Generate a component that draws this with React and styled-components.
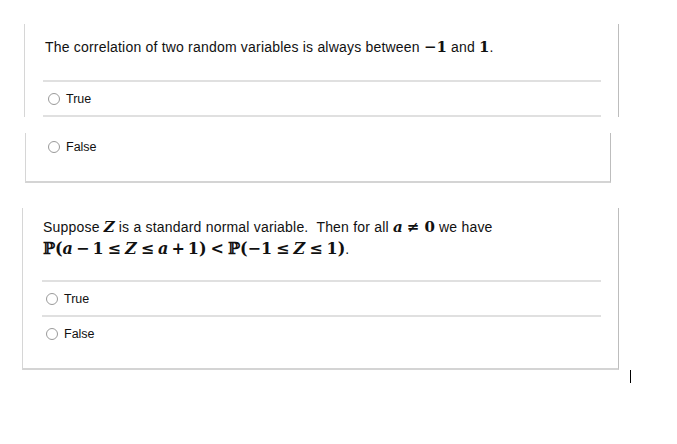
import React from 'react'
import styled, { createGlobalStyle } from 'styled-components'

const Global = createGlobalStyle`
  html, body {
    margin: 0;
    background: #fff;
    font-family: "Liberation Sans", Arial, sans-serif;
    color: #111;
  }
`

const Page = styled.div`
  width: 677px;
  height: 444px;
  padding-top: 24px;
  box-sizing: border-box;
  display: flex;
  flex-direction: column;
`

const Panel = styled.div`
  box-sizing: border-box;
  margin-left: ${p => p.left}px;
  width: ${p => p.width}px;
  margin-top: ${p => p.top || 0}px;
  border-left: 1px solid #d6d6d6;
  border-right: 1px solid #bdbdbd;
  border-bottom: ${p => (p.bottom ? '2px solid #d4d4d4' : 'none')};
  padding: ${p => p.pad || '0 17px 0 18px'};
`

const Question = styled.div`
  font-size: 14px;
  letter-spacing: 0.2px;
  line-height: 22px;
  padding: ${p => p.pad || '12px 0 22px 2px'};
`

const Mb = styled.span`
  font-family: "DejaVu Serif", "Liberation Serif", serif;
  font-weight: bold;
  font-size: 15px;
  letter-spacing: 0;
  line-height: 1;
  font-style: ${p => (p.italic ? 'italic' : 'normal')};
`

const MathLine = styled.div`
  font-family: "DejaVu Serif", "Liberation Serif", serif;
  font-weight: bold;
  font-size: 16px;
  letter-spacing: 0;
  line-height: 22px;
  & i { font-style: italic; }
`

const Op = styled.span`
  margin: 0 ${p => p.space || 3}px;
`

const Dot = styled.span`
  font-family: "Liberation Sans", Arial, sans-serif;
  font-weight: normal;
  font-size: 14px;
`

const Option = styled.label`
  display: flex;
  align-items: ${p => (p.top ? 'flex-start' : 'center')};
  gap: 6px;
  box-sizing: border-box;
  height: ${p => p.h || 35}px;
  padding-top: ${p => p.top || 0}px;
  border-top: ${p => (p.line ? '2px solid #e0e0e0' : 'none')};
  border-bottom: ${p => (p.under ? '2px solid #e0e0e0' : 'none')};
  padding-left: ${p => p.indent || 5}px;
  font-size: 12.5px;
  line-height: 14px;
  cursor: pointer;
`

const Radio = styled.span`
  width: 10px;
  height: 10px;
  margin-top: ${p => (p.shift ? 1 : 0)}px;
  border-radius: 50%;
  border: 1px solid #9a9a9a;
  background: #fff;
  flex: none;
`

const Caret = styled.span`
  align-self: flex-end;
  margin-right: 46px;
  margin-top: 0;
  width: 1px;
  height: 13px;
  background: #000;
`

export default function App () {
  return (
    <Page>
      <Global />
      <Panel left={24} width={595}>
        <Question>
          The correlation of two random variables is always between <Mb>−1</Mb> and <Mb>1</Mb>.
        </Question>
        <Option line under h={37}><Radio />True</Option>
      </Panel>
      <Panel left={25} width={586} top={16} bottom pad='0 0 0 21px'>
        <Option h={48} indent={1} top={7}><Radio shift />False</Option>
      </Panel>
      <Panel left={22} width={597} top={25} bottom pad='0 17px 0 19px'>
        <Question pad='8px 0 20px 1px'>
          Suppose <Mb italic>Z</Mb> is a standard normal variable.&nbsp; Then for all <Mb italic>a</Mb> <Mb>≠ 0</Mb> we have
          <MathLine>
            ℙ(<i>a</i><Op>−</Op>1<Op space={4}>≤</Op><i>Z</i><Op space={4}>≤</Op><i>a</i><Op>+</Op>1)<Op space={4}>&lt;</Op>ℙ(−1<Op space={4}>≤</Op><i>Z</i><Op space={4}>≤</Op>1)<Dot>.</Dot>
          </MathLine>
        </Question>
        <Option line indent={4}><Radio />True</Option>
        <Option line indent={4} h={53} top={10}><Radio shift />False</Option>
      </Panel>
      <Caret />
    </Page>
  )
}
